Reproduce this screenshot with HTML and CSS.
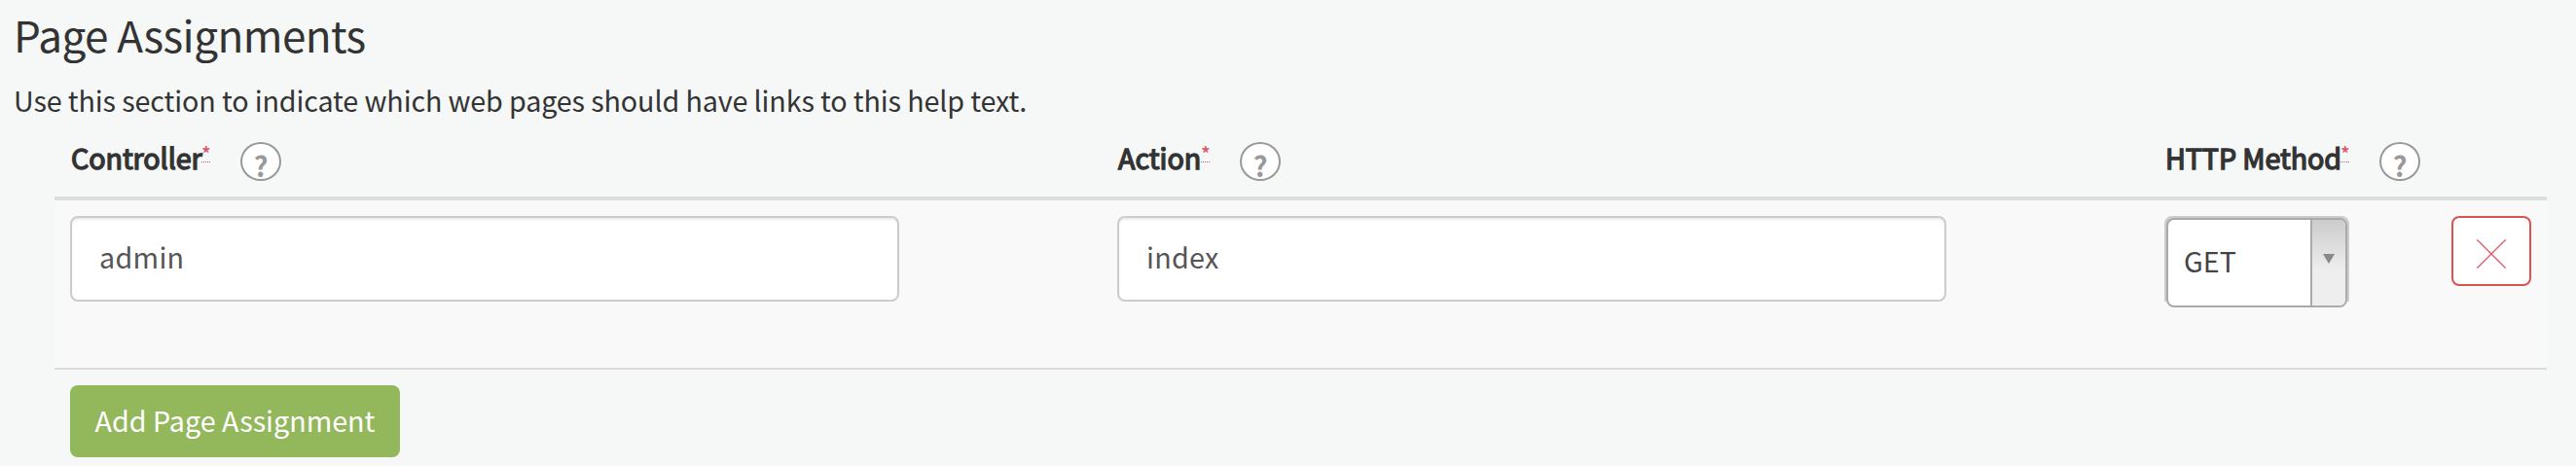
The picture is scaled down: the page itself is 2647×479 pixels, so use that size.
FILE: index.html
```html
<!DOCTYPE html>
<html lang="en">
<head>
<meta charset="utf-8">
<title>Page Assignments</title>
<link rel="stylesheet" href="styles.css">
</head>
<body>
<main class="section">
  <h2 class="title">Page Assignments</h2>
  <p class="intro">Use this section to indicate which web pages should have links to this help text.</p>
  <div class="table">
    <div class="row head">
      <div class="cell"><span class="label controller">Controller</span><abbr class="required">*</abbr><span class="help">?</span></div>
      <div class="cell"><span class="label action">Action</span><abbr class="required">*</abbr><span class="help">?</span></div>
      <div class="cell"><span class="label method">HTTP Method</span><abbr class="required">*</abbr><span class="help">?</span></div>
      <div class="cell"></div>
    </div>
    <div class="row body">
      <div class="cell"><div class="input">admin</div></div>
      <div class="cell"><div class="input">index</div></div>
      <div class="cell">
        <div class="select-frame">
          <div class="select">
            <span class="value">GET</span>
            <span class="arrow"><svg width="12" height="10" viewBox="0 0 12 10"><path d="M0 0h12L6 10z" fill="#888"/></svg></span>
          </div>
        </div>
      </div>
      <div class="cell">
        <button class="delete" type="button" aria-label="Remove"><svg width="30" height="30" viewBox="0 0 30 30"><path d="M.4.4l29.2 29.2M29.6.4L.4 29.6" stroke="#dd5566" stroke-width="1.3" fill="none"/></svg></button>
      </div>
    </div>
    <div class="foot"><button class="add" type="button">Add Page Assignment</button></div>
  </div>
</main>
</body>
</html>
```
FILE: styles.css
```css
* { box-sizing: border-box; }
body {
  margin: 0;
  background: #f5f8f7;
  color: #333;
  font-family: "Noto Sans CJK SC", "Open Sans", sans-serif;
  font-size: 28.7px;
  line-height: 40px;
}
.section { height: 479px; overflow: hidden; }
.title { margin: 0 0 13px; padding-left: 14px; font-size: 44px; font-weight: 400; line-height: 70px; letter-spacing: -.55px; }
.intro { margin: 0; height: 39px; padding-left: 14px; white-space: nowrap; letter-spacing: -.12px; }
.table { margin-left: 56px; width: 2561px; }
.row { display: grid; grid-template-columns: 1076px 1076px 295px 114px; }
.cell { padding: 0 16px; display: flex; align-items: flex-start; }
.head { height: 84px; border-bottom: 4px solid #ddd; }
.head .cell { padding-top: 20px; }
.label { padding-left: 1px; -webkit-text-stroke: 1.4px #333; white-space: nowrap; }
.controller { width: 135px; letter-spacing: -.1px; }
.action { width: 86px; }
.method { width: 181px; letter-spacing: -.1px; }
.required {
  width: 9px;
  height: 21px;
  margin-top: 4px;
  border-bottom: 1px dotted #d9534f;
  color: #dd5566;
  font-size: 20px;
  font-weight: 500;
  line-height: 23px;
  text-align: center;
}
.help {
  width: 42px;
  height: 40px;
  margin: 4px 0 0 31px;
  border: 2px solid #999;
  border-radius: 50%;
  background: #fff;
  color: #999;
  font-size: 28.7px;
  font-weight: 700;
  line-height: 43px;
  text-align: center;
}
.body { height: 174px; background: #f9f9f9; border-bottom: 2px solid #ddd; }
.body .cell { padding-top: 16px; }
.input {
  width: 852px;
  height: 88px;
  padding: 0 28px;
  border: 2px solid #ccc;
  border-radius: 8px;
  background: #fff;
  box-shadow: inset 0 2px 2px rgba(0, 0, 0, .075);
  color: #555;
  line-height: 80px;
  letter-spacing: .3px;
}
.select-frame {
  width: 190px;
  height: 94px;
  padding: 2px 2px 0;
  border-radius: 8px;
  background: linear-gradient(#ccc 88px, transparent 88px);
}
.select {
  display: flex;
  height: 92px;
  border: 2px solid #aaa;
  border-radius: 8px;
  background: #fff;
  color: #444;
  overflow: hidden;
}
.value { flex: 1; padding-left: 16px; line-height: 83px; }
.arrow {
  width: 36px;
  padding: 33px 0 0 11px;
  border-left: 2px solid #aaa;
  background: linear-gradient(to top, #eee 40%, #ccc 100%);
  line-height: 0;
}
.delete {
  display: flex;
  align-items: center;
  justify-content: center;
  width: 82px;
  height: 72px;
  padding: 6px 0 0;
  border: 2px solid #d9534f;
  border-radius: 8px;
  background: #fff;
}
.foot { padding: 16px; }
.add {
  width: 339px;
  height: 74px;
  padding: 0 0 2px;
  border: 0;
  border-radius: 8px;
  background: #93b75b;
  color: #fff;
  font: inherit;
  white-space: nowrap;
}
```
